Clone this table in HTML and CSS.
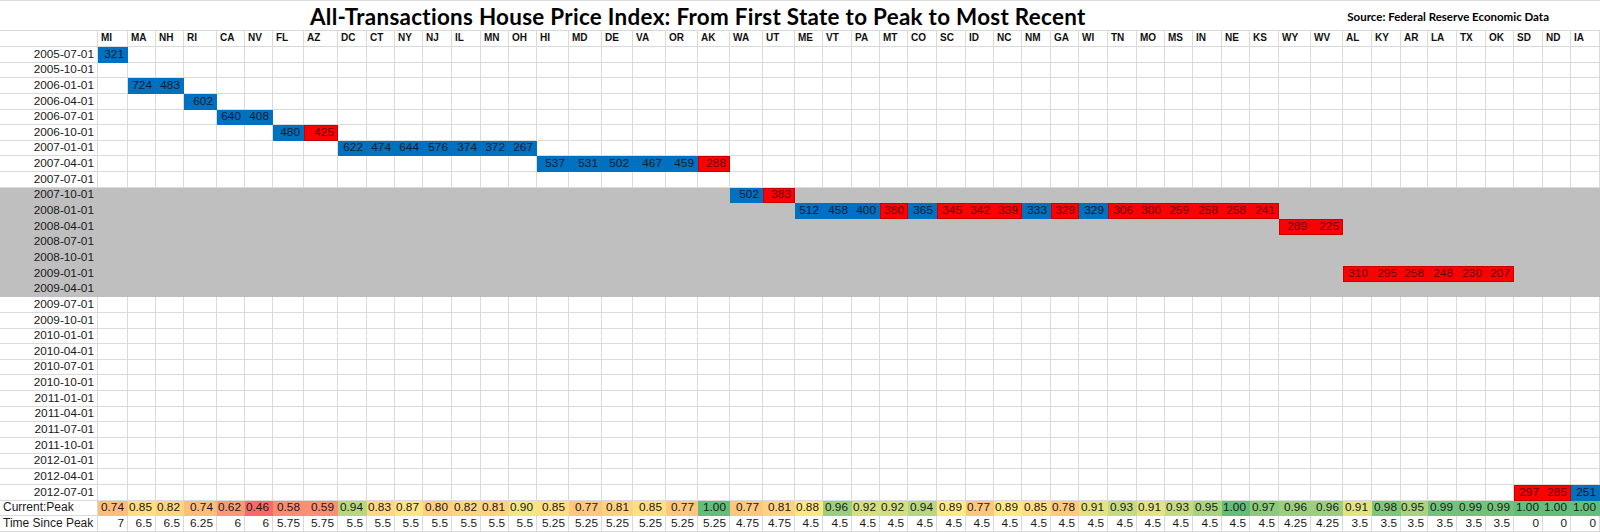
FILE: index.html
```html
<!DOCTYPE html>
<html lang="en">
<head>
<meta charset="utf-8">
<title>All-Transactions House Price Index</title>
<link rel="stylesheet" href="styles.css">
</head>
<body>
<div class="sheet" id="sheet">
  <div class="title-row">
    <h1 class="title">All-Transactions House Price Index: From First State to Peak to Most Recent</h1>
    <p class="source">Source: Federal Reserve Economic Data</p>
  </div>
</div>
<script src="script.js"></script>
</body>
</html>
```

FILE: styles.css
```css
html, body {
  margin: 0;
  padding: 0;
  background: #ffffff;
}

.sheet {
  display: grid;
  grid-template-columns: 98px 30px 28px 28px 33px 28px 28px 31px 34px 29px 28px 28px 29px 29px 28px 28px 32px 33px 31px 33px 32px 32px 33px 32px 28px 29px 28px 28px 29px 29px 28px 28px 29px 28px 29px 29px 28px 28px 29px 28px 29px 32px 32px 29px 29px 27px 29px 29px 28px 29px 28px 29px;
  grid-template-rows: 31px 16px repeat(31, 15.645px);
  width: 1600px;
  height: 532px;
  overflow: hidden;
  font-family: "Liberation Sans", Arial, sans-serif;
  font-size: 11.8px;
  color: #1a1a1a;
}

.title-row {
  grid-column: 1 / -1;
  display: flex;
  align-items: flex-start;
  box-sizing: border-box;
  border-top: 1px solid #d9d9d9;
  border-bottom: 1px solid #d9d9d9;
}

.title {
  margin: 0;
  padding: 3px 0 0 310px;
  font-family: "Lato", "Open Sans", sans-serif;
  font-weight: 700;
  font-size: 22.4px;
  letter-spacing: 0.3px;
  line-height: 26px;
  color: #000;
  white-space: nowrap;
}

.source {
  margin: 0 51px 0 auto;
  padding-top: 9px;
  font-family: "Lato", "Open Sans", sans-serif;
  font-weight: 700;
  font-size: 11.5px;
  line-height: 14px;
  color: #000;
  white-space: nowrap;
}

.c {
  box-sizing: border-box;
  display: flex;
  align-items: flex-end;
  justify-content: flex-end;
  padding: 0 3px 1px 0;
  line-height: 13px;
  border-right: 1px solid #dadada;
  border-bottom: 1px solid #dadada;
  white-space: nowrap;
  overflow: hidden;
}

.head {
  justify-content: flex-start;
  padding: 0 0 2px 3px;
  font-weight: 700;
  font-size: 10px;
  color: #111;
}

.left {
  justify-content: flex-start;
  padding-left: 3px;
  font-size: 12px;
}

.gray {
  background: #bfbfbf;
  border-color: #bfbfbf;
}

.blue {
  background: #0070c0;
  border-color: #0070c0;
  color: #0c1d2e;
}

.red {
  background: #ff0000;
  border-top: 1px solid #c80000;
  border-bottom: 1px solid #c80000;
  border-right-color: #ff0000;
  color: #5c0000;
}

.red.run-start {
  border-left: 1px solid #c80000;
}

.red.run-end {
  border-right-color: #c80000;
}

.scale {
  border-color: transparent;
}
```

FILE: script.js
```javascript
(function () {
  var sheet = document.getElementById('sheet');
  var states = 'MI MA NH RI CA NV FL AZ DC CT NY NJ IL MN OH HI MD DE VA OR AK WA UT ME VT PA MT CO SC ID NC NM GA WI TN MO MS IN NE KS WY WV AL KY AR LA TX OK SD ND IA'.split(' ');
  var ratio = [0.74,0.85,0.82,0.74,0.62,0.46,0.58,0.59,0.94,0.83,0.87,0.80,0.82,0.81,0.90,0.85,0.77,0.81,0.85,0.77,1.00,0.77,0.81,0.88,0.96,0.92,0.92,0.94,0.89,0.77,0.89,0.85,0.78,0.91,0.93,0.91,0.93,0.95,1.00,0.97,0.96,0.96,0.91,0.98,0.95,0.99,0.99,0.99,1.00,1.00,1.00];
  var since = [7,6.5,6.5,6.25,6,6,5.75,5.75,5.5,5.5,5.5,5.5,5.5,5.5,5.5,5.25,5.25,5.25,5.25,5.25,5.25,4.75,4.75,4.5,4.5,4.5,4.5,4.5,4.5,4.5,4.5,4.5,4.5,4.5,4.5,4.5,4.5,4.5,4.5,4.5,4.25,4.25,3.5,3.5,3.5,3.5,3.5,3.5,0,0,0];
  var marks = {
    '2005-07-01': 'MI b321',
    '2006-01-01': 'MA b724 NH b483',
    '2006-04-01': 'RI b602',
    '2006-07-01': 'CA b640 NV b408',
    '2006-10-01': 'FL b480 AZ r425',
    '2007-01-01': 'DC b622 CT b474 NY b644 NJ b576 IL b374 MN b372 OH b267',
    '2007-04-01': 'HI b537 MD b531 DE b502 VA b467 OR b459 AK r288',
    '2007-10-01': 'WA b502 UT r383',
    '2008-01-01': 'ME b512 VT b458 PA b400 MT r380 CO b365 SC r345 ID r342 NC r339 NM b333 GA r329 WI b329 TN r306 MO r300 MS r259 IN r258 NE r258 KS r241',
    '2008-04-01': 'WY r289 WV r225',
    '2009-01-01': 'AL r310 KY r295 AR r258 LA r248 TX r230 OK r207',
    '2012-07-01': 'SD r297 ND r285 IA b251'
  };

  function cell(cls, text) {
    var d = document.createElement('div');
    d.className = 'c' + (cls ? ' ' + cls : '');
    if (text !== undefined && text !== null) d.textContent = text;
    sheet.appendChild(d);
    return d;
  }

  cell('head', '');
  states.forEach(function (s) { cell('head', s); });

  var dates = [];
  for (var y = 2005; y <= 2012; y++) {
    ['01', '04', '07', '10'].forEach(function (m) {
      var key = y + '-' + m + '-01';
      if (key >= '2005-07-01' && key <= '2012-07-01') dates.push(key);
    });
  }

  dates.forEach(function (dt) {
    var gray = dt >= '2007-10-01' && dt <= '2009-04-01';
    var row = {};
    if (marks[dt]) {
      var parts = marks[dt].split(' ');
      for (var i = 0; i < parts.length; i += 2) {
        row[parts[i]] = { kind: parts[i + 1].charAt(0), val: parts[i + 1].slice(1) };
      }
    }
    cell(gray ? 'gray' : '', dt);
    states.forEach(function (s, idx) {
      var m = row[s];
      if (!m) { cell(gray ? 'gray' : '', ''); return; }
      if (m.kind === 'b') { cell('blue', m.val); return; }
      var prev = row[states[idx - 1]];
      var next = row[states[idx + 1]];
      var cls = 'red';
      if (!prev || prev.kind !== 'r') cls += ' run-start';
      if (!next || next.kind !== 'r') cls += ' run-end';
      cell(cls, m.val);
    });
  });

  var sorted = ratio.slice().sort(function (a, b) { return a - b; });
  var min = sorted[0], max = sorted[sorted.length - 1], mid = sorted[Math.floor(sorted.length / 2)];
  var lo = [248, 105, 107], md = [255, 235, 132], hi = [99, 190, 123];
  function mix(a, b, t) {
    return 'rgb(' + a.map(function (v, i) { return Math.round(v + (b[i] - v) * t); }).join(',') + ')';
  }
  function colour(v) {
    if (v <= mid) return mix(lo, md, mid === min ? 1 : (v - min) / (mid - min));
    return mix(md, hi, (v - mid) / (max - mid));
  }

  cell('left', 'Current:Peak');
  ratio.forEach(function (v) {
    var d = cell('scale', v.toFixed(2));
    d.style.background = colour(v);
  });

  cell('left', 'Time Since Peak');
  since.forEach(function (v) { cell('', String(v)); });
})();
```
